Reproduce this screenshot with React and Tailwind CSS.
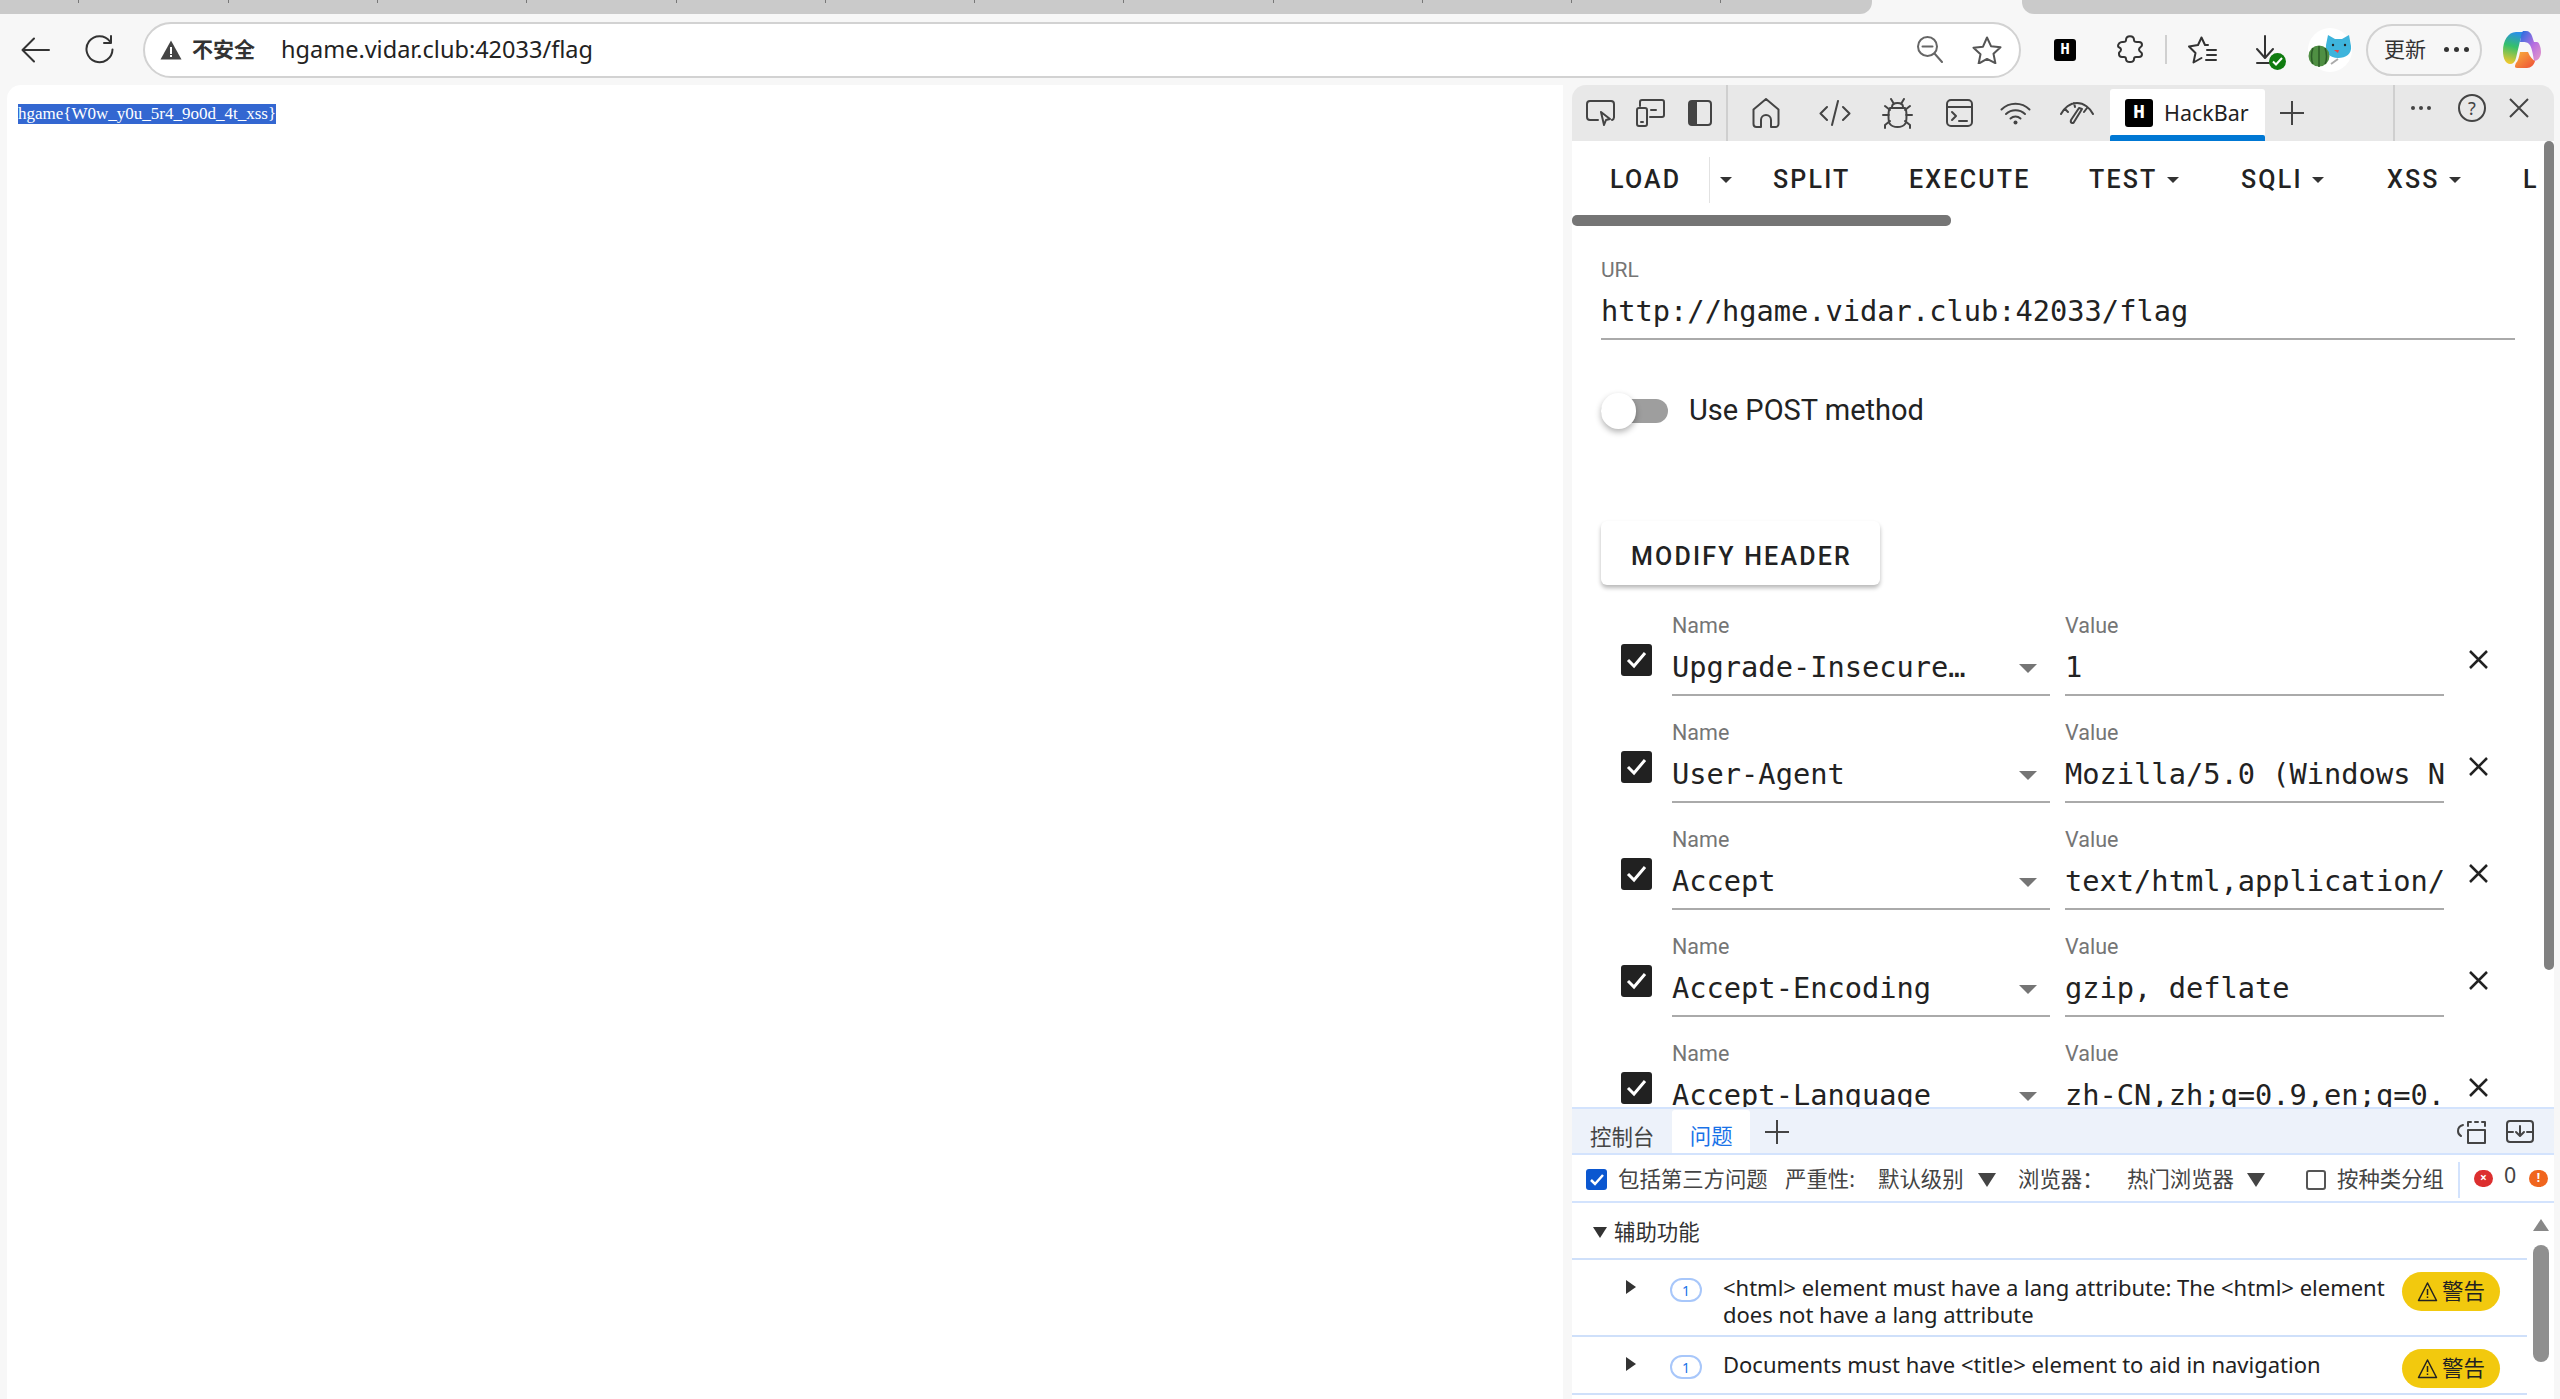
const cjk = "font-['Noto_Sans','Noto_Sans_CJK_SC',sans-serif]";
const stroke = { fill: "none", stroke: "#444", strokeWidth: 2, strokeLinecap: "round", strokeLinejoin: "round" };

function HLogo({ className, text }) {
  return (
    <div className={`flex shrink-0 items-center justify-center rounded-[3px] bg-black font-['Liberation_Mono',monospace] font-bold text-white ${className} ${text}`}>
      H
    </div>
  );
}

function Arrow({ className = "" }) {
  return <span className={`h-0 w-0 shrink-0 border-x-[6px] border-t-[6px] border-x-transparent border-t-[#333] ${className}`} />;
}

function TabStrip() {
  const ticks = [79, 150, 149, 149, 150, 149, 149, 149, 150, 149, 149, 149];
  return (
    <div className="flex h-[14px] shrink-0">
      <div className="flex w-[1872px] rounded-br-[12px] bg-[#cacaca]">
        {ticks.map((w, i) => (
          <div key={i} className="h-[3px] shrink-0 border-r border-[#777]" style={{ width: w }} />
        ))}
      </div>
      <div className="w-[150px]" />
      <div className="flex-1 rounded-bl-[12px] bg-[#cacaca]" />
    </div>
  );
}

function BrowserBar() {
  return (
    <div className="flex h-[71px] shrink-0 items-center">
      <svg className="ml-[21px]" width="29" height="26" viewBox="0 0 29 26" {...stroke} stroke="#333">
        <path d="M1.5 13H28M13 1.5 1.5 13 13 24.5" />
      </svg>
      <svg className="ml-[35px]" width="29" height="29" viewBox="0 0 29 29" {...stroke} stroke="#333">
        <path d="M25 6.5A13 13 0 1 0 27.5 14.5M26 1v7h-7" />
      </svg>
      <div className="ml-[29px] flex h-[56px] w-[1878px] shrink-0 items-center rounded-full border-2 border-[#d2d2d2] bg-white">
        <svg className="ml-[15px]" width="22" height="20" viewBox="0 0 22 20">
          <path d="M11 .5 21.5 19.5H.5Z" fill="#444" />
          <path d="M10 7h2v7h-2zM10 15h2v2h-2z" fill="#fff" />
        </svg>
        <span className={`ml-[10px] text-[21px] font-bold text-[#333] ${cjk}`}>不安全</span>
        <span className={`ml-[26px] text-[23.500px] text-[#222] ${cjk}`}>hgame.vidar.club:42033/flag</span>
        <svg className="ml-auto" width="26" height="27" viewBox="0 0 26 27" fill="none" stroke="#666" strokeWidth="2" strokeLinecap="round">
          <circle cx="10.5" cy="10.5" r="9.5" />
          <path d="M5.5 10.5h10M17.5 17.5l7.5 8.5" />
        </svg>
        <svg className="ml-[29px] mr-[17px]" width="30" height="28" viewBox="0 0 30 28" fill="none" stroke="#555" strokeWidth="2" strokeLinejoin="round">
          <path d="M15 1.5l4 8.7 9.5 1.1-7 6.5 1.9 9.4L15 22.9l-8.400 4.800 1.900-9.400-7-6.500 9.500-1.100Z" />
        </svg>
      </div>
      <HLogo className="ml-[33px] h-[22px] w-[22px]" text="text-[16px]" />
      <svg className="ml-[41px]" width="26" height="29" viewBox="0 0 26 29" {...stroke} stroke="#333">
        <path d="M9 5c0-5 8-5 8 0 0 2 1 2 3 2h2c2 0 3 1 3 3 0 2-3 2-3 4.500s3 2.500 3 4.500c0 2-1 3-3 3h-3c-2 0-2 1-2 2 0 4-8 4-8 0 0-1 0-2-2-2H5c-2 0-3-1-3-3v-1c0-1 2-1 2-3.500S1 13 1 11c0-2 2-4 4-4h1c2 0 3 0 3-2Z" />
      </svg>
      <div className="ml-[22px] h-[29px] w-[2px] bg-[#d0d0d0]" />
      <svg className="ml-[20px]" width="30" height="28" viewBox="0 0 30 28" {...stroke} stroke="#333">
        <path d="M21 9h-3L14.500 1.500 11 9l-9 1.500 6.500 6.500L6.500 26.500l8-4.500M20 14h9M20 19h9M19 24h10" />
      </svg>
      <div className="relative ml-[39px] h-[30px] w-[28px]">
        <svg width="18" height="29" viewBox="0 0 18 29" {...stroke} stroke="#333">
          <path d="M9 1v21M1 14l8 9 8-9M1 28h12" />
        </svg>
        <div className="absolute right-[-2px] top-[18px] flex h-[17px] w-[17px] items-center justify-center rounded-full bg-[#107c10]">
          <svg width="11" height="9" viewBox="0 0 11 9" fill="none" stroke="#fff" strokeWidth="2">
            <path d="M1 4.500 4 7.500 10 1" />
          </svg>
        </div>
      </div>
      <svg className="ml-[24px]" width="44" height="44" viewBox="0 0 44 44">
        <circle cx="22" cy="22" r="22" fill="#fff" />
        <path d="M18 17 20 7l7 4h7l7-4 2 11c1 8-5 12-13 12-8 0-13-5-12-13Z" fill="#3eb4dc" />
        <circle cx="25" cy="17" r="1.200" fill="#222" />
        <circle cx="37" cy="17" r="1.200" fill="#222" />
        <path d="M26 22l4 3 1-3Z" fill="#e44" />
        <circle cx="11" cy="28" r="10.500" fill="#4f8f43" />
        <path d="M11 18v21M5 20c-2 5-2 12 0 16M17 20c2 5 2 12 0 16" stroke="#2c5c27" strokeWidth="1.500" fill="none" />
        <path d="M23 36l7-5" stroke="#aaa" strokeWidth="2" />
      </svg>
      <div className="ml-[14px] flex h-[52px] w-[116px] shrink-0 items-center rounded-full border-2 border-[#d2d2d2]">
        <span className={`ml-[16px] text-[21px] text-[#333] ${cjk}`}>更新</span>
        <span className="ml-[18px] flex gap-[5px]">
          <i className="h-[5px] w-[5px] rounded-full bg-[#333]" />
          <i className="h-[5px] w-[5px] rounded-full bg-[#333]" />
          <i className="h-[5px] w-[5px] rounded-full bg-[#333]" />
        </span>
      </div>
      <svg className="ml-[21px]" width="38" height="37" viewBox="0 0 38 37">
        <defs>
          <linearGradient id="cpA" x1="0.5" y1="0" x2="0.3" y2="1">
            <stop offset="0" stopColor="#2a8fe8" />
            <stop offset="0.45" stopColor="#35c06a" />
            <stop offset="1" stopColor="#f4c82c" />
          </linearGradient>
          <linearGradient id="cpB" x1="0" y1="0" x2="1" y2="1">
            <stop offset="0" stopColor="#1b6fe0" />
            <stop offset="0.55" stopColor="#b86fe0" />
            <stop offset="1" stopColor="#e79ac8" />
          </linearGradient>
          <linearGradient id="cpC" x1="0" y1="0" x2="1" y2="1">
            <stop offset="0" stopColor="#f9b13c" />
            <stop offset="1" stopColor="#ee4d37" />
          </linearGradient>
        </defs>
        <path d="M13 1h11c-4 1-6 5-7 9l-4 17c-1 4-3 6-6 6-4 0-7-5-7-13C0 10 5 1 13 1Z" fill="url(#cpA)" />
        <path d="M20 0h3c3 0 5 2 6 5l2 6h3c2 0 4 5 4 10s-3 9-7 9c-1-6-2-14-5-17-2-2-4-2-9-2 1-5 1-9 3-11Z" fill="url(#cpB)" />
        <path d="M17 21h8c2 5 5 8 7 9-1 4-4 7-8 7H14c-3 0-2-3-1-5 2-2 3-6 4-11Z" fill="url(#cpC)" />
      </svg>
    </div>
  );
}

function DevBar() {
  return (
    <div className="flex h-[56px] shrink-0 items-center rounded-t-[14px] bg-[#e8e8e8]">
      <svg className="ml-[14px]" width="29" height="26" viewBox="0 0 29 26" {...stroke}>
        <path d="M12 20H4a3 3 0 0 1-3-3V4a3 3 0 0 1 3-3h21a3 3 0 0 1 3 3v13a3 3 0 0 1-2 3" />
        <path d="M15 12l9 7-4 1-2 5Z" />
      </svg>
      <svg className="ml-[21px]" width="29" height="28" viewBox="0 0 29 28" {...stroke}>
        <path d="M4 7V3a2 2 0 0 1 2-2h20a2 2 0 0 1 2 2v13a2 2 0 0 1-2 2H14M15 11h5" />
        <rect x="1" y="9" width="10" height="18" rx="2" />
        <path d="M5 23h2" />
      </svg>
      <svg className="ml-[23px]" width="24" height="26" viewBox="0 0 24 26">
        <rect x="1" y="1" width="22" height="24" rx="3" fill="none" stroke="#444" strokeWidth="2" />
        <path d="M4 1h5v24H4a3 3 0 0 1-3-3V4a3 3 0 0 1 3-3Z" fill="#444" />
      </svg>
      <div className="ml-[14px] h-full w-[2px] bg-[#cfcfcf]" />
      <svg className="ml-[24px]" width="28" height="30" viewBox="0 0 28 30" {...stroke}>
        <path d="M14 1 1.500 11.500V26a3 3 0 0 0 3 3H9v-7a5 5 0 0 1 10 0v7h4.500a3 3 0 0 0 3-3V11.500Z" />
      </svg>
      <svg className="ml-[39px]" width="32" height="26" viewBox="0 0 32 26" {...stroke}>
        <path d="M8 7 1.500 13.500 8 20M24 7l6.500 6.500L24 20M19 1 13 25" />
      </svg>
      <svg className="ml-[31px]" width="31" height="31" viewBox="0 0 31 31" {...stroke}>
        <path d="M9 1l3 5M22 1l-3 5M10 9c0-3 2-4 5.500-4S21 6 21 9M8 10h15c2 2 2 14 0 16-3 4-12 4-15 0-2-2-2-14 0-16ZM1 17h6M24 17h6M3 8l5 4M28 8l-5 4M3 30v-3l5-4M28 30v-3l-5-4" />
      </svg>
      <svg className="ml-[33px]" width="27" height="28" viewBox="0 0 27 28" {...stroke}>
        <rect x="1" y="1" width="25" height="26" rx="4" />
        <path d="M1 8h25M6 13l4 4-4 4M13 22h8" />
      </svg>
      <svg className="ml-[27px]" width="31" height="24" viewBox="0 0 31 24" {...stroke}>
        <path d="M1.500 8.500a20 20 0 0 1 28 0M6 13a14 14 0 0 1 19 0M10.500 17.500a7.500 7.500 0 0 1 10 0" />
        <circle cx="15.500" cy="21.500" r="2" fill="#444" stroke="none" />
      </svg>
      <svg className="ml-[29px]" width="34" height="24" viewBox="0 0 34 24" {...stroke}>
        <path d="M1 13C4 7 10 2 17 2s13 5 16 11M5 8l3 3M14 2l1 4M27 7l-3 4" />
        <path d="M22 8l-8 13c-1 2-4 1-3-2l8-12Z" />
      </svg>
      <div className="ml-[16px] flex h-[52px] w-[155px] shrink-0 flex-col self-end rounded-t-[3px] bg-white">
        <div className="flex flex-1 items-center pl-[15px] pt-[2px]">
          <HLogo className="h-[28px] w-[28px]" text="text-[20px]" />
          <span className="ml-[11px] font-['Noto_Sans',sans-serif] text-[21.500px] text-[#222]">HackBar</span>
        </div>
        <div className="h-[6px] rounded-t-[2px] bg-[#0078d4]" />
      </div>
      <svg className="ml-[15px]" width="24" height="24" viewBox="0 0 24 24" fill="none" stroke="#444" strokeWidth="2">
        <path d="M12 0v24M0 12h24" />
      </svg>
      <div className="ml-[89px] h-full w-[2px] bg-[#cfcfcf]" />
      <span className="ml-[16px] mb-[10px] flex gap-[4px]">
        <i className="h-[4px] w-[4px] rounded-full bg-[#444]" />
        <i className="h-[4px] w-[4px] rounded-full bg-[#444]" />
        <i className="h-[4px] w-[4px] rounded-full bg-[#444]" />
      </span>
      <div className="ml-[27px] mb-[10px] flex h-[28px] w-[28px] items-center justify-center rounded-full border-2 border-[#444] font-['Noto_Sans',sans-serif] text-[18px] text-[#444]">?</div>
      <svg className="ml-[23px] mb-[10px]" width="20" height="20" viewBox="0 0 20 20" fill="none" stroke="#444" strokeWidth="2">
        <path d="M1 1l18 18M19 1 1 19" />
      </svg>
    </div>
  );
}

function HackMenu() {
  const btn = "shrink-0 font-['Roboto',sans-serif] text-[25px] font-medium tracking-[2.200px] text-[#222] whitespace-nowrap";
  return (
    <div className="flex h-[74px] w-[968px] shrink-0 items-center overflow-hidden pt-[3px]">
      <span className={`ml-[38px] w-[99px] ${btn}`}>LOAD</span>
      <div className="h-[46px] w-px shrink-0 bg-[#e2e2e2]" />
      <Arrow className="ml-[10px]" />
      <span className={`ml-[41px] w-[136px] ${btn}`}>SPLIT</span>
      <span className={`w-[180px] ${btn}`}>EXECUTE</span>
      <span className={`w-[78px] ${btn}`}>TEST</span>
      <Arrow className="mr-[62px]" />
      <span className={`w-[71px] ${btn}`}>SQLI</span>
      <Arrow className="mr-[63px]" />
      <span className={`w-[62px] ${btn}`}>XSS</span>
      <Arrow className="mr-[62px]" />
      <span className={btn}>LFI</span>
    </div>
  );
}

function Field({ label, value, select, className }) {
  return (
    <div className={`flex shrink-0 flex-col ${className}`}>
      <span className="h-[24px] font-['Roboto',sans-serif] text-[21.500px] leading-[24px] text-[#757575]">{label}</span>
      <div className="flex h-[58px] items-center border-b-2 border-[#aaa] pt-[4px]">
        <span className={`whitespace-nowrap font-['DejaVu_Sans_Mono',monospace] text-[28.700px] text-[#222] ${select ? "w-[300px]" : "w-full"}`}>
          {value}
        </span>
        {select && <span className="ml-[47px] h-0 w-0 border-x-[9px] border-t-[9px] border-x-transparent border-t-[#757575]" />}
      </div>
    </div>
  );
}

function HeaderRow({ name, value }) {
  return (
    <div className="flex h-[107px] shrink-0 items-start">
      <div className="ml-[20px] mt-[30px] flex h-[32px] w-[31px] shrink-0 items-center justify-center rounded-[3px] bg-[#212121]">
        <svg width="21" height="18" viewBox="0 0 21 18" fill="none" stroke="#fff" strokeWidth="3">
          <path d="M2 9l6 6L19 2" />
        </svg>
      </div>
      <Field className="ml-[20px] w-[378px]" label="Name" value={name} select />
      <Field className="ml-[15px] w-[379px]" label="Value" value={value} />
      <svg className="ml-[25px] mt-[36px] shrink-0" width="19" height="19" viewBox="0 0 19 19" fill="none" stroke="#222" strokeWidth="2.500">
        <path d="M1 1l17 17M18 1 1 18" />
      </svg>
    </div>
  );
}

function HackBar() {
  const rows = [
    ["Upgrade-Insecure…", "1"],
    ["User-Agent", "Mozilla/5.0 (Windows N"],
    ["Accept", "text/html,application/"],
    ["Accept-Encoding", "gzip, deflate"],
    ["Accept-Language", "zh-CN,zh;q=0.9,en;q=0."],
  ];
  return (
    <div className="relative flex h-[966px] shrink-0 flex-col overflow-hidden bg-white">
      <HackMenu />
      <div className="h-[11px] w-[379px] shrink-0 rounded-[5px] bg-[#757575]" />
      <div className="flex flex-col px-[29px]">
        <span className="mt-[32px] h-[24px] font-['Roboto',sans-serif] text-[21px] leading-[24px] text-[#757575]">URL</span>
        <div className="flex h-[58px] w-[914px] items-center border-b-2 border-[#aaa] pt-[4px]">
          <span className="font-['DejaVu_Sans_Mono',monospace] text-[28.700px] text-[#222]">http://hgame.vidar.club:42033/flag</span>
        </div>
        <div className="mt-[53px] flex h-[36px] items-center">
          <div className="relative h-[24px] w-[67px] rounded-full bg-[#9e9e9e]">
            <div className="absolute left-0 top-[-6px] h-[36px] w-[35px] rounded-full bg-white shadow-[0_3px_6px_rgba(0,0,0,0.3)]" />
          </div>
          <span className="ml-[21px] font-['Roboto',sans-serif] text-[29px] text-[#222]">Use POST method</span>
        </div>
        <button className="mt-[92px] h-[64px] w-[279px] rounded-[6px] bg-white pt-[8px] pl-[2px] font-['Roboto',sans-serif] text-[25px] font-medium tracking-[2.200px] text-[#222] shadow-[0_3px_4px_rgba(0,0,0,0.28)]">
          MODIFY HEADER
        </button>
        <div className="mt-[29px] flex flex-col">
          {rows.map(([n, v]) => (
            <HeaderRow key={n} name={n} value={v} />
          ))}
        </div>
      </div>
      <div className="absolute right-0 top-0 h-[829px] w-[10px] rounded-[5px] bg-[#808080]" />
    </div>
  );
}

function Badge() {
  return (
    <div className={`ml-[9px] flex h-[39px] w-[98px] shrink-0 items-center justify-center self-start rounded-full bg-[#f2c90e] text-[21.500px] text-[#222] ${cjk}`}>
      <svg className="mr-[4px]" width="21" height="21" viewBox="0 0 21 21" fill="none" stroke="#222" strokeWidth="1.500" strokeLinejoin="round">
        <path d="M10.500 2 19.500 19.500H1.500ZM10.500 8v6M10.500 15.500v1.500" />
      </svg>
      警告
    </div>
  );
}

function Issue({ children, h }) {
  return (
    <div className={`flex border-b-2 border-[#cfe0fa] ${h}`}>
      <span className="ml-[54px] mt-[20px] h-0 w-0 shrink-0 border-y-[7px] border-l-[10px] border-y-transparent border-l-[#333]" />
      <div className="ml-[34px] mt-[18px] flex h-[24px] w-[32px] shrink-0 items-center justify-center rounded-full border-2 border-[#a8c7fa] font-['Noto_Sans',sans-serif] text-[14px] text-[#1a73e8]">
        1
      </div>
      <div className={`ml-[21px] mt-[14px] w-[670px] shrink-0 text-[22px] leading-[27px] text-[#222] ${cjk}`}>{children}</div>
      <div className="mt-[12px]">
        <Badge />
      </div>
    </div>
  );
}

function Bubble({ className, children }) {
  return (
    <span className={`relative flex h-[17px] w-[19px] shrink-0 items-center justify-center rounded-full text-[12px] font-bold leading-none text-white ${className}`}>
      {children}
    </span>
  );
}

function Drawer() {
  const t = `text-[21.400px] text-[#444] whitespace-nowrap ${cjk}`;
  return (
    <div className="flex min-h-0 flex-1 flex-col bg-white">
      <div className={`flex h-[48px] shrink-0 items-end border-y-2 border-[#d3e3fd] bg-[#edf2fa] ${cjk}`}>
        <span className="ml-[18px] text-[21.400px] text-[#444]">控制台</span>
        <div className="ml-[18px] flex h-[43px] w-[78px] items-center justify-center rounded-t-[3px] bg-white pt-[10px] text-[21.400px] text-[#1a73e8]">问题</div>
        <svg className="ml-[15px] mb-[9px]" width="24" height="24" viewBox="0 0 24 24" fill="none" stroke="#444" strokeWidth="2">
          <path d="M12 0v24M0 12h24" />
        </svg>
        <svg className="ml-auto mb-[9px]" width="30" height="24" viewBox="0 0 30 24" {...stroke}>
          <path d="M6 5C2 6 1 8 1 11s1 4 3 5M11 10h17v13H11zM11 6V2h3M18 2h3M25 2h3v4" />
        </svg>
        <svg className="ml-[19px] mr-[20px] mb-[9px]" width="28" height="24" viewBox="0 0 28 24" {...stroke}>
          <rect x="1" y="1" width="26" height="21" rx="3" />
          <path d="M14 6v9M10 12l4 4 4-4M1 12h6M21 12h6" />
        </svg>
      </div>
      <div className="flex h-[48px] shrink-0 items-center border-b-2 border-[#d3e3fd] pt-[3px]">
        <div className="ml-[14px] flex h-[21px] w-[21px] items-center justify-center rounded-[3px] bg-[#0b57d0]">
          <svg width="14" height="12" viewBox="0 0 14 12" fill="none" stroke="#fff" strokeWidth="2.500"><path d="M1 6l4 4 8-9" /></svg>
        </div>
        <span className={`ml-[11px] w-[167px] ${t}`}>包括第三方问题</span>
        <span className={`w-[93px] ${t}`}>严重性:</span>
        <span className={`w-[100px] ${t}`}>默认级别</span>
        <span className="h-0 w-0 border-x-[9px] border-t-[14px] border-x-transparent border-t-[#444]" />
        <span className={`ml-[22px] w-[109px] ${t}`}>浏览器：</span>
        <span className={`w-[120px] ${t}`}>热门浏览器</span>
        <span className="h-0 w-0 border-x-[9px] border-t-[14px] border-x-transparent border-t-[#444]" />
        <div className="ml-[41px] h-[20px] w-[20px] rounded-[3px] border-2 border-[#555]" />
        <span className={`ml-[11px] w-[121px] ${t}`}>按种类分组</span>
        <div className="h-[36px] w-[2px] bg-[#d3e3fd]" />
        <Bubble className="ml-[14px] mb-[3px] bg-[#dc2f2f]">×</Bubble>
        <span className="ml-[11px] mb-[8px] w-[12px] font-['Noto_Sans',sans-serif] text-[21.400px] text-[#444]">0</span>
        <Bubble className="ml-[13px] mb-[3px] bg-[#f0651e]">!</Bubble>
      </div>
      <div className="relative flex min-h-0 flex-1 overflow-hidden">
        <div className="w-[955px] shrink-0">
          <div className={`flex h-[57px] items-center border-b-2 border-[#cfe0fa] pt-[3px] ${cjk}`}>
            <span className="ml-[21px] h-0 w-0 border-x-[7px] border-t-[11px] border-x-transparent border-t-[#333]" />
            <span className="ml-[7px] text-[21.400px] text-[#333]">辅助功能</span>
          </div>
          <Issue h="h-[77px]">&lt;html&gt; element must have a lang attribute: The &lt;html&gt; element does not have a lang attribute</Issue>
          <Issue h="h-[58px]">Documents must have &lt;title&gt; element to aid in navigation</Issue>
        </div>
        <div className="flex flex-1 flex-col items-center">
          <span className="mt-[16px] h-0 w-0 border-x-[8px] border-b-[12px] border-x-transparent border-b-[#888]" />
          <div className="mt-[14px] h-[117px] w-[16px] rounded-full bg-[#8f8f8f]" />
        </div>
      </div>
    </div>
  );
}

export default function App() {
  return (
    <div className="flex h-[1399px] w-[2560px] flex-col overflow-hidden bg-[#f7f7f7]">
      <TabStrip />
      <BrowserBar />
      <div className="flex min-h-0 flex-1">
        <div className="ml-[7px] w-[1556px] shrink-0 rounded-tl-[14px] bg-white pl-[11px] pt-[16px]">
          <span className="inline-block h-[20px] bg-[#3367d1] font-['Liberation_Serif',serif] text-[17px] leading-[20px] text-white">
            hgame{"{"}W0w_y0u_5r4_9o0d_4t_xss{"}"}
          </span>
        </div>
        <div className="ml-[9px] flex w-[982px] shrink-0 flex-col">
          <DevBar />
          <HackBar />
          <Drawer />
        </div>
      </div>
    </div>
  );
}
